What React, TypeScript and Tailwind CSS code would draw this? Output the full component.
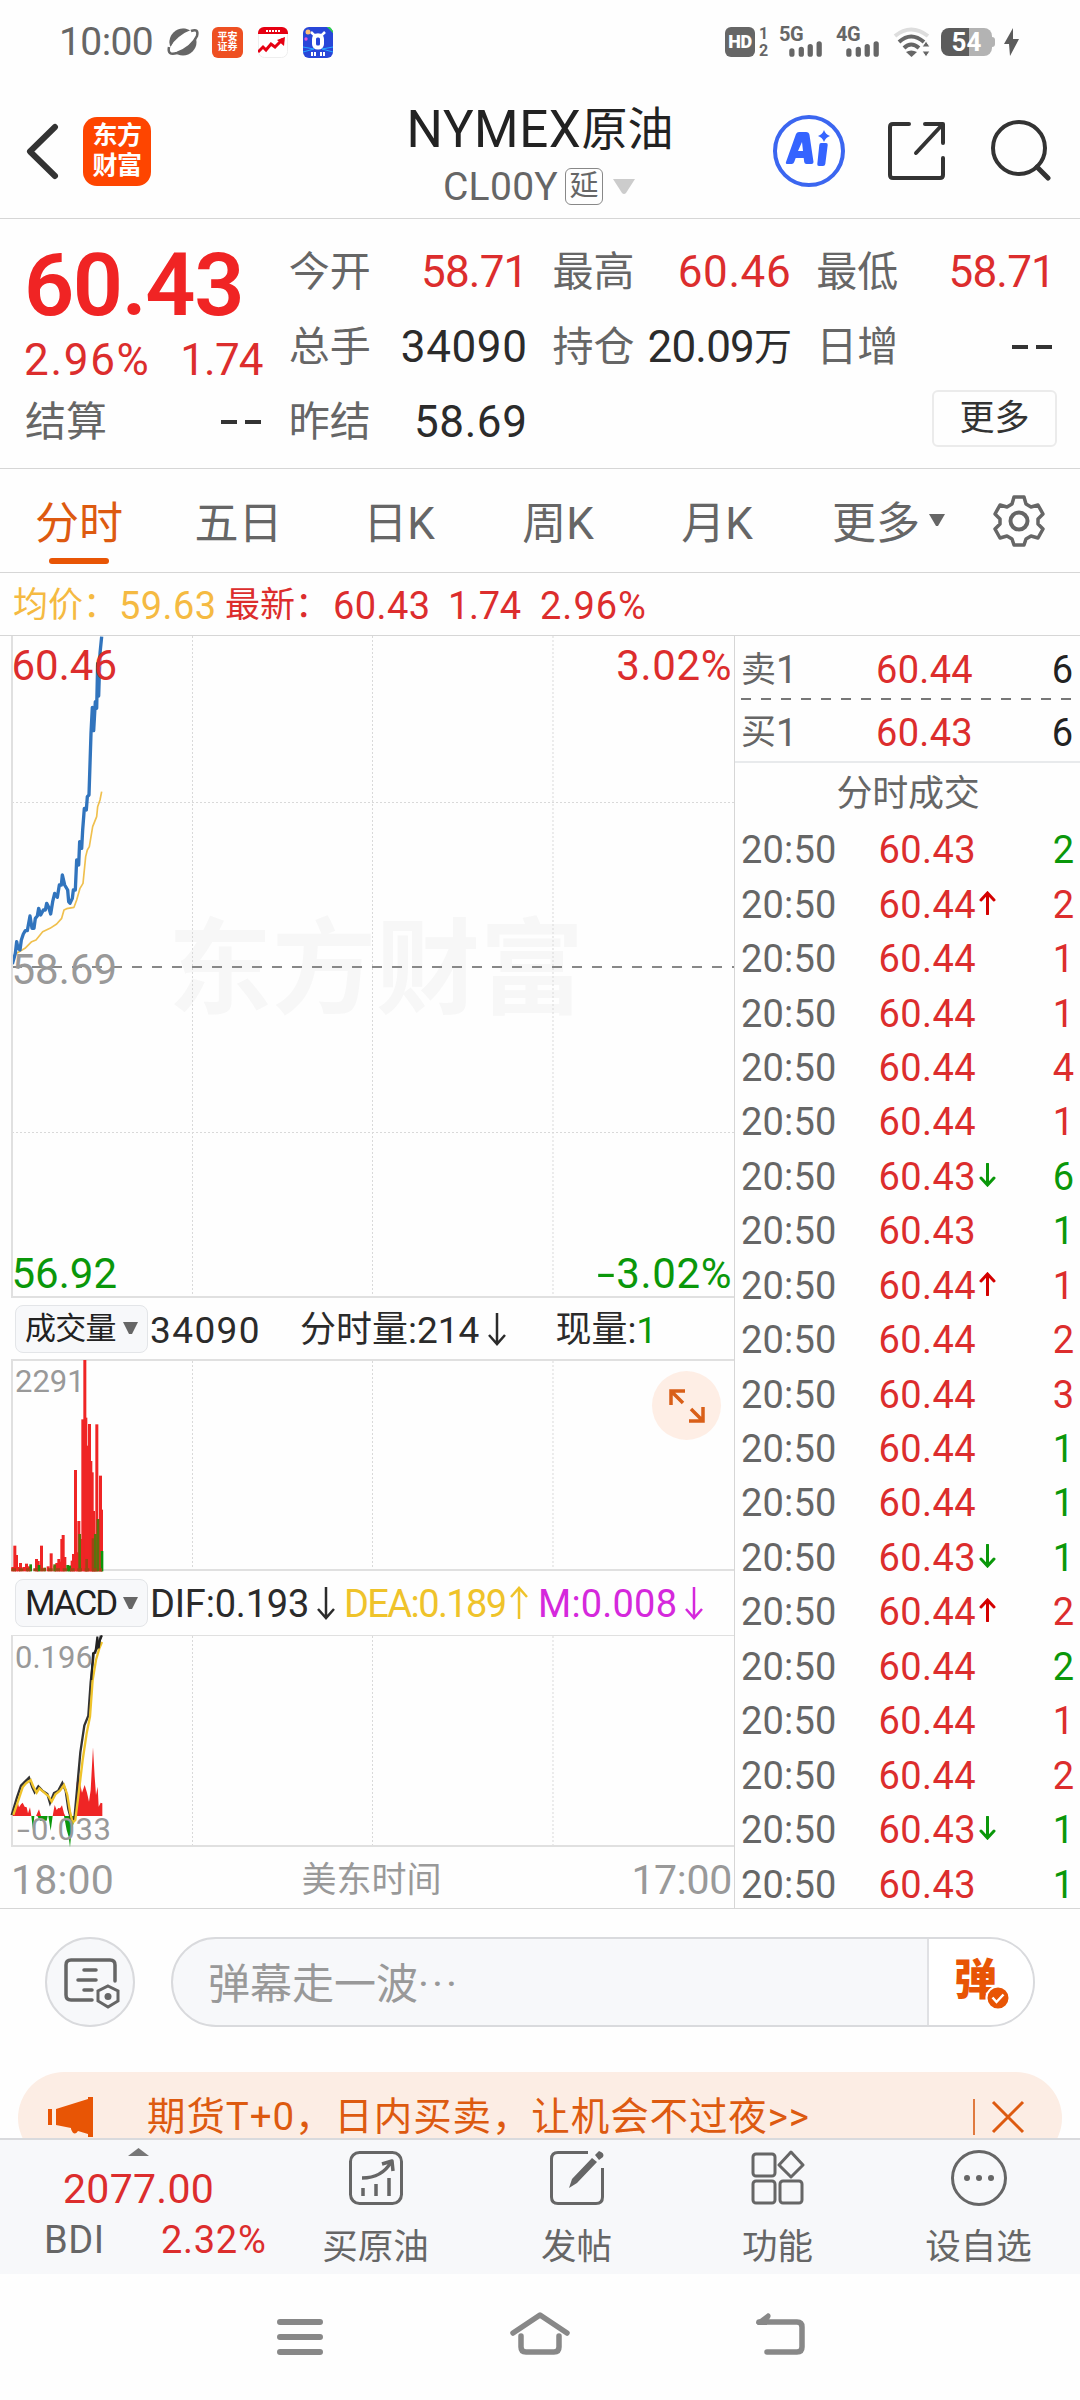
import React from "react";

const RED = "text-[#dc2d2d]";
const GREEN = "text-[#0a970a]";

function Cjk({ children, className = "" }: { children: React.ReactNode; className?: string }) {
  return <span className={"leading-none " + className}>{children}</span>;
}

function StatusBar() {
  return (
    <div className="flex h-[84px] items-center pl-[59px] text-[#666]">
      <span className="w-[107px] text-[39px] tracking-[-0.6px]">10:00</span>
      <svg width="34" height="30" viewBox="-1 0 34 30" className="mr-[12px]">
        <circle cx="16" cy="15" r="13.5" fill="#666" />
        <ellipse cx="16" cy="15" rx="17" ry="6.6" transform="rotate(-40 16 15)" fill="#fff" />
        <path d="M24 4Q32 1 30 9 25 20 10 26 0 29 2 20" fill="none" stroke="#666" strokeWidth="2.500" />
        <path d="M7 7A13.500 13.500 0 0 1 20 2Q8 9 4 19 0 13 7 7Z" fill="#666" />
      </svg>
      <div className="mr-[15px] flex h-[31px] w-[31px] flex-col items-center justify-center rounded-[6px] bg-[#ee5022] text-[10px] font-bold leading-[10px] text-white">
        <span>平安</span>
        <span>证券</span>
      </div>
      <svg width="30" height="31" viewBox="0 0 30 31" className="mr-[15px]">
        <rect x=".5" y=".5" width="29" height="30" rx="6" fill="#fff" stroke="#eee" />
        <path d="M0 7V6a6 6 0 0 1 6-6h18a6 6 0 0 1 6 6v1Z" fill="#e60012" />
        <path d="M8 4h15" stroke="#fff" strokeWidth="2" strokeDasharray="2 1" />
        <path d="M0 25l5-5 3 3 5-6 4 3 8-8" fill="none" stroke="#e60012" strokeWidth="3" />
        <path d="M19 13l8-3-1 9Z" fill="#e60012" />
      </svg>
      <svg width="30" height="31" viewBox="0 0 30 31">
        <rect width="30" height="31" rx="6" fill="#2846d8" />
        <path d="M0 20l11 2-11 3M30 20l-11 2 11 3" stroke="#27a7ff" fill="none" />
        <path d="M8 5l3 3h8l3-3" fill="none" stroke="#fff" strokeWidth="2.500" />
        <rect x="11" y="8.500" width="8" height="12" rx="3.500" fill="none" stroke="#fff" strokeWidth="4" />
        <circle cx="5" cy="5" r="2.500" fill="#ffbe76" />
        <path d="M24 0h3l3 4v2Z" fill="#2fd24a" />
        <circle cx="3" cy="12" r="1.700" fill="#e454d8" />
        <path d="M9 25v4M12 25v4M18 25v4M21 25v4" stroke="#fff" strokeWidth="2" />
      </svg>
      <div className="ml-[392px] flex h-[30px] w-[30px] items-center justify-center rounded-[6px] bg-[#666] text-[18px] font-black tracking-[-0.5px] text-white">HD</div>
      <div className="ml-[4px] flex w-[20px] flex-col text-[16px] font-bold leading-[17px]">
        <span>1</span>
        <span>2</span>
      </div>
      <Signal label="5G" />
      <Signal label="4G" />
      <svg width="40" height="30" viewBox="0 0 40 30">
        <g fill="none" strokeWidth="4">
          <path d="M2 9Q18-4 35 9" stroke="#ddd" />
          <path d="M6 15Q18 4 31 15" stroke="#666" />
          <path d="M11 21Q18 14 26 21" stroke="#666" />
        </g>
        <path d="M13 25q5-3 11 0l-5.500 5Z" fill="#666" />
        <path d="M33 14l4 6h-8ZM33 30l4-6h-8Z" fill="#666" stroke="#fff" strokeWidth="1" />
      </svg>
      <div className="ml-[8px] flex h-[28px] w-[51px] items-center justify-center rounded-[8px] bg-[linear-gradient(90deg,#5c5c5c_55%,#b3b3b3_55%)] text-[26px] font-bold leading-[28px] text-white">
        54
      </div>
      <div className="h-[10px] w-[3px] rounded-r bg-[#b3b3b3]" />
      <svg width="15" height="29" viewBox="0 0 15 29" className="ml-[9px]">
        <path d="M9 0L0 16h5L6 28 15 11H9Z" fill="#5c5c5c" />
      </svg>
    </div>
  );
}

function Signal({ label }: { label: string }) {
  return (
    <div className="flex h-[30px] w-[57px] flex-col">
      <span className="h-[14px] text-[20px] font-bold leading-[15px] tracking-[-0.5px]">{label}</span>
      <svg width="36" height="17" viewBox="0 0 36 17" className="ml-[9px]">
        <path d="M3 10.500V14M13 9V14M22.500 6V14M32 3V14" stroke="#666" strokeWidth="5.600" strokeLinecap="round" />
      </svg>
    </div>
  );
}

function Header() {
  return (
    <header className="grid h-[135px] grid-cols-[1fr_auto_1fr] border-b border-[#d6d6d6]">
      <div className="flex items-center pl-[26px]">
        <svg width="33" height="57" viewBox="0 0 33 57">
          <path d="M29 4L4 28.500 29 53" fill="none" stroke="#333" strokeWidth="6" strokeLinecap="round" strokeLinejoin="round" />
        </svg>
        <div className="ml-[24px] flex h-[69px] w-[68px] flex-col items-center justify-center rounded-[14px] bg-[#fe4500] text-[25px] font-bold leading-[30px] tracking-[-0.5px] text-white">
          <span>东方</span>
          <span>财富</span>
        </div>
      </div>
      <div className="flex flex-col items-center pt-[21px]">
        <div className="flex h-[48px] items-center text-[#222]">
          <span className="text-[51px] tracking-[0.6px]">NYMEX</span>
          <Cjk className="text-[46px]">原油</Cjk>
        </div>
        <div className="-ml-[2px] mt-[15px] flex h-[37px] items-center text-[#666]">
          <span className="pt-[2px] text-[39px] tracking-[0.3px]">CL00Y</span>
          <span className="ml-[7px] flex h-[37px] w-[38px] items-center justify-center rounded-[6px] border border-[#888] text-[29px]">延</span>
          <svg width="22" height="15" viewBox="0 0 22 15" className="ml-[10px]">
            <path d="M0 0h22L13 14q-2 2-4 0Z" fill="#ccc" />
          </svg>
        </div>
      </div>
      <div className="flex items-center justify-end pr-[29px]">
        <svg width="74" height="74" viewBox="0 0 74 74">
          <circle cx="37" cy="37" r="34" fill="#fff" stroke="#3b66f0" strokeWidth="4" />
          <path fillRule="evenodd" d="M14 48l10-28q1-2 3-2h7q3 0 3.500 3l4 27q0 2-2 2h-5q-2 0-2.300-2l-.5-4h-8l-1.500 4q-.7 2-2.500 2h-4q-2.500 0-1.700-2ZM26 37h5l-1-9Z" fill="#3564ff" />
          <path d="M49 29h5q2 0 1.700 2l-2.400 19q-.3 2-2.300 2h-4q-2 0-1.700-2l2-19q.2-2 1.700-2Z" fill="#3564ff" />
          <path d="M52 16q1.500 4.500 6 6-4.500 1.500-6 6-1.500-4.500-6-6 4.500-1.500 6-6Z" fill="#3564ff" />
        </svg>
        <svg width="58" height="60" viewBox="0 0 58 60" className="ml-[42px]">
          <path d="M21 3H5Q2 3 2 6V54Q2 57 5 57H52Q55 57 55 54V37M37 3H55V22M54 4L28 32" fill="none" stroke="#333" strokeWidth="4" strokeLinecap="round" strokeLinejoin="round" />
        </svg>
        <svg width="60" height="62" viewBox="0 0 60 62" className="ml-[45px]">
          <circle cx="28" cy="28" r="26" fill="none" stroke="#333" strokeWidth="4" />
          <path d="M46 47L57 58" stroke="#333" strokeWidth="5" strokeLinecap="round" />
        </svg>
      </div>
    </header>
  );
}

function Stat({ label, value, tone }: { label: string; value: string; tone?: string }) {
  const narrow = value.endsWith("1") || value.includes("万");
  return (
    <div className="-mr-px flex h-[75px] items-center justify-between whitespace-nowrap pt-[5px]">
      <Cjk className="-ml-px text-[41px] text-[#666]">{label}</Cjk>
      {value === "--" ? (
        <span className="mr-[3px] flex gap-[8px]">
          <i className="h-[4px] w-[16px] bg-[#333]" />
          <i className="h-[4px] w-[16px] bg-[#333]" />
        </span>
      ) : (
        <span className={"flex items-center text-[44px] " + (narrow ? "tracking-[-0.8px] " : "tracking-[0.6px] ") + (tone ?? "text-[#2b2b2b]")}>
          {value.replace("万", "")}
          {value.includes("万") && <Cjk className="text-[38px]">万</Cjk>}
        </span>
      )}
    </div>
  );
}

function Quote() {
  return (
    <section className="grid h-[250px] grid-cols-4 gap-x-[27px] border-b border-[#d6d6d6] pl-[26px] pr-[26px] pt-[13px]">
      <div>
        <div className="-ml-[2px] flex h-[106px] items-center text-[88px] font-semibold tracking-[-1.4px] text-[#f02424]">60.43</div>
        <div className={"-ml-[2px] flex h-[44px] items-center justify-between text-[44px] " + RED}>
          <span className="tracking-[1.700px]">2.96%</span>
          <span className="tracking-[-0.8px]">1.74</span>
        </div>
        <Stat label="结算" value="--" />
      </div>
      <div>
        <Stat label="今开" value="58.71" tone={RED} />
        <Stat label="总手" value="34090" />
        <Stat label="昨结" value="58.69" />
      </div>
      <div>
        <Stat label="最高" value="60.46" tone={RED} />
        <Stat label="持仓" value="20.09万" />
      </div>
      <div>
        <Stat label="最低" value="58.71" tone={RED} />
        <Stat label="日增" value="--" />
        <div className="flex h-[73px] items-center justify-end">
          <button className="-mr-[3px] flex h-[57px] w-[125px] items-center justify-center rounded-[6px] border-2 border-[#ebebeb] text-[35px] text-[#333]">更多</button>
        </div>
      </div>
    </section>
  );
}

function Tabs() {
  return (
    <nav className="flex h-[104px] items-center whitespace-nowrap border-b border-[#d6d6d6] pt-[6px] text-[44px] text-[#666]">
      <div className="relative flex h-full w-[158px] items-center justify-center text-[#dd5a10]">
        分时
        <i className="absolute bottom-[8px] left-[49px] h-[6px] w-[60px] rounded-full bg-[#e85505]" />
      </div>
      <div className="w-[161px] text-center">五日</div>
      <div className="w-[160px] text-center">日K</div>
      <div className="w-[158px] text-center">周K</div>
      <div className="w-[160px] text-center">月K</div>
      <div className="ml-[35px]">更多</div>
      <svg width="16" height="13" viewBox="0 0 16 13" className="-mt-[6px] ml-[9px]">
        <path d="M0 0h16L9 12H7Z" fill="#666" />
      </svg>
      <svg width="54" height="54" viewBox="0 0 54 54" className="-mt-[6px] ml-[47px]">
        <path d="M22 3h10l2 7 5 3 7-2 5 9-5 5v5l5 5-5 9-7-2-5 3-2 6H22l-2-6-5-3-7 2-5-9 5-5v-5l-5-5 5-9 7 2 5-3Z" fill="none" stroke="#666" strokeWidth="3.500" strokeLinejoin="round" />
        <circle cx="27" cy="27" r="8.500" fill="none" stroke="#666" strokeWidth="4" />
      </svg>
    </nav>
  );
}

function Summary() {
  return (
    <div className={"flex h-[63px] items-center whitespace-nowrap border-b border-[#d6d6d6] pl-[13px] pt-[3px] text-[38px] " + RED}>
      <span className="flex w-[212px] items-center text-[#f5ba42]">
        <Cjk className="w-[106px] text-[35px]">均价：</Cjk>
        <span className="tracking-[0.4px]">59.63</span>
      </span>
      <Cjk className="w-[108px] text-[35px]">最新：</Cjk>
      <span className="w-[115px] tracking-[0.4px]">60.43</span>
      <span className="w-[92px] tracking-[-0.3px]">1.74</span>
      <span className="tracking-[1px]">2.96%</span>
    </div>
  );
}

const GRID_X = [180.5, 360.5, 541];

function GridLines({ height }: { height: number }) {
  return (
    <g stroke="#d9d9d9" strokeDasharray="2 2">
      {GRID_X.map((x) => (
        <path key={x} d={`M${x} 0V${height}`} />
      ))}
    </g>
  );
}

function Minus() {
  return <span className="mr-[3px] inline-block w-[16px] origin-left scale-x-[1.55]">-</span>;
}

function PriceChart() {
  return (
    <div className="relative ml-[11px] h-[662px] border-b-2 border-l-2 border-[#e0e0e0]">
      <div className="absolute left-[155px] top-[283px] text-[104px] font-bold leading-none text-[#f7f7f7]">东方财富</div>
      <svg width="721" height="660" viewBox="1 0 721 660" className="absolute left-0 top-0">
        <GridLines height={660} />
        <path d="M0 166.500H722M0 496.500H722" stroke="#d9d9d9" strokeDasharray="2 2" />
        <path d="M0 331H722" stroke="#888" strokeWidth="2" strokeDasharray="10 10" />
        <g transform="translate(-12 -16) scale(.33333)" fill="none" strokeLinejoin="round">
          <path d="M50 1000L75 985 95 965 108 960 128 935 150 925 170 912 185 895 192 870 200 866 222 862 230 840 240 805 249 790 257 710 262 690 268 680 278 620 290 590 293 560 300 540 305 515" stroke="#f0c04e" strokeWidth="5" />
          <path d="M37 1032L42 1015 46 1000 50 965 54 985 60 990 64 960 70 942 76 932 82 932 90 888 96 925 102 925 106 895 112 888 116 865 122 885 130 870 136 870 140 850 146 862 152 882 158 845 164 820 172 832 178 795 184 795 187 765 194 795 203 810 206 845 210 850 217 835 220 810 226 810 230 720 236 735 239 665 245 685 248 630 253 565 259 570 262 530 267 525 273 340 277 262 281 332 286 245 290 265 293 130 296 228 300 100 305 50" stroke="#3174bd" strokeWidth="10" />
        </g>
      </svg>
      <div className="absolute -left-[1.500px] right-0 top-[9px] flex justify-between pr-[2px] text-[42px] leading-[42px] text-[#dc2d2d]">
        <span>60.46</span>
        <span className="tracking-[0.6px]">3.02%</span>
      </div>
      <div className="absolute -left-[1.500px] top-[313px] text-[42px] leading-[42px] text-[#999]">58.69</div>
      <div className="absolute -left-[1.500px] bottom-[1px] right-0 flex justify-between pr-[2px] text-[42px] leading-[42px] text-[#0a970a]">
        <span>56.92</span>
        <span className="tracking-[0.6px]"><Minus />3.02%</span>
      </div>
    </div>
  );
}

function Picker({ label }: { label: string }) {
  return (
    <div className="flex h-[48px] w-[133px] items-center justify-between rounded-[8px] border border-[#e3e5e8] bg-[#f7f8fa] pl-[9px] pr-[9px] text-[#222]">
      <span>{label}</span>
      <svg width="15" height="13" viewBox="0 0 15 13">
        <path d="M0 0h15L9 12H6Z" fill="#666" />
      </svg>
    </div>
  );
}

function Arrow({ up = false, className = "" }: { up?: boolean; className?: string }) {
  return (
    <svg width="18" height="34" viewBox="0 0 18 34" className={"shrink-0 " + className}>
      <path d={up ? "M9 33V2M1 11L9 2 17 11" : "M9 1V32M1 23L9 32 17 23"} fill="none" stroke="currentColor" strokeWidth="2.500" />
    </svg>
  );
}

const VOL_RED: [number, number][] = [
  [39, 684], [45, 620], [50, 648], [56, 684], [62, 672], [72, 684], [80, 674], [86, 682], [110, 660], [115, 666], [125, 620], [145, 682],
  [154, 643], [165, 680], [171, 672], [177, 660], [182, 668], [186, 600], [190, 588], [195, 654], [211, 680], [217, 665], [221, 645],
  [227, 393], [232, 640], [237, 546], [243, 600], [249, 241], [255, 63], [258, 236], [263, 320], [269, 255], [273, 366], [277, 400],
  [281, 516], [286, 600], [291, 256], [296, 560], [302, 410], [305, 512],
];
const VOL_GREEN: [number, number, string][] = [
  [92, 676, "#1c8b0c"], [117, 678, "#1c8b0c"], [134, 686, "#5b720c"], [164, 676, "#5b720c"], [203, 678, "#1c8b0c"], [209, 680, "#1c8b0c"],
  [239, 585, "#5b720c"], [260, 660, "#a04414"], [279, 598, "#a04414"], [286, 585, "#5b720c"], [294, 540, "#5b720c"], [306, 636, "#0a970a"],
];

function VolumeChart() {
  return (
    <div className="relative ml-[11px] h-[212px] border-y-2 border-l-2 border-[#e0e0e0]">
      <svg width="721" height="208" viewBox="1 0 721 208" className="absolute left-0 top-0 overflow-visible">
        <GridLines height={208} />
      </svg>
      <div className="absolute left-[2px] top-[5px] text-[31px] leading-[31px] text-[#999]">2291</div>
      <svg width="110" height="212" viewBox="1 0 110 212" className="absolute left-0 top-0 overflow-visible">
        <g transform="translate(-12 -22) scale(.33333)">
          {VOL_RED.map(([x, y], i) => (
            <rect key={i} x={x - 5} y={y} width="9" height={697 - y} fill="#ef2525" />
          ))}
          {VOL_GREEN.map(([x, y, c], i) => (
            <rect key={i} x={x - 4} y={y} width="8" height={697 - y} fill={c} />
          ))}
          <path d="M34 692H306" stroke="#a04414" strokeWidth="9" strokeDasharray="14 8" />
        </g>
      </svg>
      <div className="absolute right-[13px] top-[10px] flex h-[69px] w-[69px] items-center justify-center rounded-full bg-[#feeee5]">
        <svg width="36" height="36" viewBox="0 0 36 36">
          <path d="M2 17V3H16M3 4L14 15M34 19V33H20M33 32L22 21" fill="none" stroke="#d95f18" strokeWidth="3.500" />
        </svg>
      </div>
    </div>
  );
}

function MacdChart() {
  return (
    <div className="relative ml-[11px] h-[212px] border-b-2 border-l-2 border-t border-[#e0e0e0]">
      <svg width="721" height="209" viewBox="1 0 721 209" className="absolute left-0 top-0 overflow-visible">
        <GridLines height={209} />
        <g transform="translate(-12 -296) scale(.33333)">
          <path d="M38 1428L46 1400 52 1382 57 1402 63 1393 68 1388 74 1400 80 1402 84 1420 90 1402 94 1428ZM108 1428L117 1408 123 1428ZM158 1428L164 1395 170 1410 175 1404 180 1405 186 1396 192 1420 196 1428ZM229 1428L230 1330 236 1290 240 1330 246 1358 254 1335 261 1358 267 1385 272 1350 279 1222 284 1310 288 1365 293 1340 296 1400 302 1388 307 1390V1428Z" fill="#ef2525" />
          <path d="M94 1428L99 1470 103 1428ZM112 1428H143L140 1442 120 1442ZM145 1428L152 1472 158 1428ZM192 1428L200 1470 206 1490 210 1522 215 1470 222 1446 226 1428Z" fill="#0a970a" />
          <path d="M38 1428L54 1375 66 1340 78 1328 90 1316 100 1345 107 1360 118 1342 130 1355 145 1365 153 1392 165 1362 178 1355 190 1332 200 1355 208 1410 216 1440 226 1440 236 1330 244 1240 256 1160 268 1130 275 1030 284 945 296 925 306 890" transform="translate(-3 -3)" fill="none" stroke="#333" strokeWidth="7" />
          <path d="M40 1425L56 1378 68 1342 78 1330 92 1320 100 1340 110 1358 118 1345 132 1357 145 1368 155 1385 167 1362 180 1352 192 1335 202 1365 210 1415 218 1448 226 1440 236 1360 248 1260 260 1180 270 1130 278 1020 288 960 298 925 306 906" fill="none" stroke="#efc32a" strokeWidth="7" />
          <path d="M274 1020L279 940 286 938 292 890 296 925 300 900 306 886" fill="none" stroke="#222" strokeWidth="6" />
        </g>
      </svg>
      <div className="absolute left-[2px] top-[6px] text-[31px] leading-[31px] text-[#999]">0.196</div>
      <div className="absolute bottom-0 left-[4px] text-[31px] leading-[31px] tracking-[0.5px] text-[#999]"><span className="inline-block w-[14px] origin-left scale-x-[1.500]">-</span>0.033</div>
    </div>
  );
}

function ChartColumn() {
  return (
    <div className="w-[735px] shrink-0 border-r border-[#d6d6d6]">
      <PriceChart />
      <div className="flex h-[61px] items-center whitespace-nowrap pl-[15px] text-[37px] text-[#2b2b2b]">
        <div className="text-[31px] tracking-[-0.8px]"><Picker label="成交量" /></div>
        <span className="ml-[2px] w-[150px] pt-[3px] tracking-[1.4px]">34090</span>
        <span className="flex items-center pt-[3px]"><Cjk className="text-[36px]">分时量</Cjk>:214</span>
        <Arrow className="ml-[9px]" />
        <span className="ml-[49px] flex items-center pt-[3px]"><Cjk className="text-[36px]">现量</Cjk>:<span className={GREEN}>1</span></span>
      </div>
      <VolumeChart />
      <div className="flex h-[64px] items-center whitespace-nowrap pl-[15px] text-[38px] text-[#2b2b2b]">
        <div className="text-[35px] tracking-[-2px]"><Picker label="MACD" /></div>
        <span className="ml-[2px] w-[167px] pt-[2px] tracking-[-0.2px]">DIF:0.193</span>
        <Arrow />
        <span className="ml-[9px] flex w-[194px] items-center text-[#efc32a]">
          <span className="w-[166px] pt-[2px] tracking-[-1.600px]">DEA:0.189</span>
          <Arrow up />
        </span>
        <span className="flex items-center text-[#d528dc]">
          <span className="w-[147px] pt-[2px] tracking-[0.2px]">M:0.008</span>
          <Arrow />
        </span>
      </div>
      <MacdChart />
      <div className="flex h-[61px] items-center justify-between pl-[11px] pr-[2px] pt-[6px] text-[41px] text-[#999]">
        <span className="w-[120px] tracking-[0.2px]">18:00</span>
        <Cjk className="text-[35px]">美东时间</Cjk>
        <span className="w-[120px] text-right tracking-[-0.3px]">17:00</span>
      </div>
    </div>
  );
}

type Trade = { p: string; q: number; d?: "up" | "down"; g?: boolean };
const TRADES: Trade[] = [
  { p: "60.43", q: 2, g: true },
  { p: "60.44", q: 2, d: "up" },
  { p: "60.44", q: 1 },
  { p: "60.44", q: 1 },
  { p: "60.44", q: 4 },
  { p: "60.44", q: 1 },
  { p: "60.43", q: 6, d: "down", g: true },
  { p: "60.43", q: 1, g: true },
  { p: "60.44", q: 1, d: "up" },
  { p: "60.44", q: 2 },
  { p: "60.44", q: 3 },
  { p: "60.44", q: 1, g: true },
  { p: "60.44", q: 1, g: true },
  { p: "60.43", q: 1, d: "down", g: true },
  { p: "60.44", q: 2, d: "up" },
  { p: "60.44", q: 2, g: true },
  { p: "60.44", q: 1 },
  { p: "60.44", q: 2 },
  { p: "60.43", q: 1, d: "down", g: true },
  { p: "60.43", q: 1, g: true },
];

function Level({ label, price }: { label: string; price: string }) {
  return (
    <div className="flex h-full items-center pl-[6px] pr-[7px] text-[38px]">
      <span className="flex items-center text-[#666]"><Cjk className="text-[35px]">{label}</Cjk>1</span>
      <span className={"ml-auto w-[98px] text-right tracking-[0.3px] " + RED}>{price}</span>
      <span className="w-[100px] text-right text-[#222]">6</span>
    </div>
  );
}

function OrderColumn() {
  return (
    <div className="w-[345px]">
      <div className="h-[62px] pt-[6px]"><Level label="卖" price="60.44" /></div>
      <svg width="332" height="2" className="ml-[6px] block">
        <path d="M0 1H332" stroke="#777" strokeWidth="2" strokeDasharray="10 10" />
      </svg>
      <div className="h-[63px] border-b-2 border-[#e8eaec] pt-[4px]"><Level label="买" price="60.43" /></div>
      <div className="flex h-[60px] items-center justify-center pl-[2px] pr-[1px] pt-[2px] text-[36px] leading-none tracking-[-0.3px] text-[#666]">分时成交</div>
      <div>
        {TRADES.map((t, i) => (
          <div key={i} className="flex h-[54.45px] items-center pl-[6px] pr-[6px] text-[38px] text-[#dc2d2d]">
            <span className="w-[136px] tracking-[0.2px] text-[#666]">20:50</span>
            <span className="w-[99px] text-right tracking-[0.4px]">{t.p}</span>
            <span className="w-[20px] pl-[3px]">
              {t.d && (
                <svg width="17" height="24" viewBox="0 0 17 24" className={t.d === "up" ? "mb-[4px] block text-[#d40000]" : "mb-[4px] block text-[#0a970a]"}>
                  <path d={t.d === "up" ? "M8.500 23V3M2 9L8.500 2 15 9" : "M8.500 1V21M2 15L8.500 22 15 15"} fill="none" stroke="currentColor" strokeWidth="3" strokeLinecap="round" />
                </svg>
              )}
            </span>
            <span className={"flex-1 text-right " + (t.g ? GREEN : RED)}>{t.q}</span>
          </div>
        ))}
      </div>
    </div>
  );
}

function CommentBar() {
  return (
    <div className="flex pl-[45px] pt-[28px]">
      <div className="flex h-[90px] w-[90px] items-center justify-center rounded-full border-2 border-[#d9dadd] bg-[#f7f8fa]">
        <svg width="56" height="52" viewBox="0 0 56 52" className="ml-[3px] mt-[3px]">
          <path d="M51 23V7Q51 2 46 2H7Q2 2 2 7V37Q2 42 7 42H28M20 12H32M14 22H32M20 32H28" fill="none" stroke="#666" strokeWidth="3.500" strokeLinecap="round" />
          <path d="M44 28L54 33V43L44 49 34 43V33Z" fill="#f7f8fa" stroke="#666" strokeWidth="3" />
          <circle cx="44" cy="38.500" r="3.500" fill="#666" />
        </svg>
      </div>
      <div className="ml-[36px] flex h-[90px] w-[864px] overflow-hidden rounded-full border-2 border-[#d9dadd] bg-[#f7f8fa]">
        <div className="flex flex-1 items-center pl-[35px] pt-[5px] text-[42px] leading-none text-[#999]">
          弹幕走一波<span className="tracking-[3px]">···</span>
        </div>
        <div className="relative w-[106px] border-l-2 border-[#e0e1e4] bg-white">
          <span className="absolute left-[25px] top-[20px] text-[43px] font-black leading-none text-[#e85505]">弹</span>
          <svg width="26" height="26" viewBox="0 0 26 26" className="absolute left-[56px] top-[46px]">
            <circle cx="13" cy="13" r="11.500" fill="#e85505" stroke="#fff" strokeWidth="2" />
            <path d="M7.500 12.500L11.500 17 18.500 9.500" fill="none" stroke="#fff" strokeWidth="2.500" />
          </svg>
        </div>
      </div>
    </div>
  );
}

function Banner() {
  return (
    <div className="mx-[18px] mt-[45px] h-[66px] overflow-hidden">
      <div className="flex h-[92px] items-center whitespace-nowrap rounded-[46px] bg-[#fcede4] pl-[30px] text-[38.500px] leading-none text-[#dd5a10]">
        <svg width="46" height="40" viewBox="0 0 46 40" className="-mt-[3px]">
          <path d="M0 12H4V28H0ZM8 12L40 2V0H45V40H40V37L30 34Q26 40 23 32V31L8 28Z" fill="#e85505" />
        </svg>
        <span className="-mt-px ml-[53px] w-[826px] tracking-[0.9px]">期货T+0，日内买卖，让机会不过夜&gt;&gt;</span>
        <i className="-mt-[2px] h-[36px] w-[2px] bg-[#e07a40]" />
        <svg width="34" height="34" viewBox="0 0 34 34" className="-mt-[3px] ml-[16px]">
          <path d="M2 2L32 32M32 2L2 32" stroke="#dd5a10" strokeWidth="3" />
        </svg>
      </div>
    </div>
  );
}

function NavItem({ label, children }: { label: string; children: React.ReactNode }) {
  return (
    <div className="flex w-[201px] flex-col items-center pt-[10px]">
      <svg width="56" height="56" viewBox="0 0 56 56" fill="none" stroke="#666" strokeWidth="3" strokeLinejoin="round">
        {children}
      </svg>
      <span className="mt-[24px] text-[35.500px] leading-none text-[#666]">{label}</span>
    </div>
  );
}

function BottomNav() {
  return (
    <div className="flex h-[136px] border-t-2 border-[#d9dadd] bg-[#f7f8fa]">
      <div className="w-[275px]">
        <svg width="21" height="8" viewBox="0 0 21 8" className="ml-[128px] mt-[8px] block">
          <path d="M0 8L10.500 0 21 8Z" fill="#777" />
        </svg>
        <div className={"mt-[13px] pl-[63px] text-[41px] leading-[40px] tracking-[0.3px] " + RED}>2077.00</div>
        <div className="mt-[13px] flex items-center pl-[44px] text-[38px] leading-[36px] text-[#666]">
          <span className="w-[117px] tracking-[0.6px]">BDI</span>
          <span className={"tracking-[0.7px] " + RED}>2.32%</span>
        </div>
      </div>
      <NavItem label="买原油">
        <rect x="2.500" y="2.500" width="51" height="51" rx="9" />
        <path d="M14 28Q34 28 43 12M34 14L44 11 45 21M15 38V46M28 34V46M41 28V46" strokeWidth="3.500" />
      </NavItem>
      <NavItem label="发帖">
        <path d="M39 2.500H9Q2.500 2.500 2.500 9V47Q2.500 53.500 9 53.500H47Q53.500 53.500 53.500 47V18" />
        <path d="M20 38L23 29 43 8 48 12 28 33ZM46 5L50 1Q56 3 54 7L50 10Z" fill="#666" stroke="none" />
      </NavItem>
      <NavItem label="功能">
        <rect x="3" y="4" width="22" height="22" rx="3" />
        <path d="M41 2L53 15 41 27 29 15Z" />
        <rect x="3" y="31" width="22" height="22" rx="3" />
        <rect x="30" y="31" width="22" height="22" rx="3" />
      </NavItem>
      <NavItem label="设自选">
        <circle cx="28" cy="28" r="26.500" />
        <path d="M16 28h.01M28 28h.01M40 28h.01" strokeWidth="6" strokeLinecap="round" />
      </NavItem>
    </div>
  );
}

function SystemNav() {
  return (
    <div className="flex h-[126px] items-start pl-[277px] pt-[37px] text-[#888]">
      <svg width="46" height="46" viewBox="0 0 46 46">
        <path d="M3 11H43M3 26H43M3 41H43" stroke="currentColor" strokeWidth="6" strokeLinecap="round" />
      </svg>
      <svg width="60" height="46" viewBox="0 0 60 46" className="ml-[187px]">
        <path d="M3 22L30 4 57 22M11 25V36Q11 41 16 41H44Q49 41 49 36V25" fill="none" stroke="currentColor" strokeWidth="5.500" strokeLinecap="round" strokeLinejoin="round" />
      </svg>
      <svg width="50" height="46" viewBox="0 0 50 46" className="ml-[185px]">
        <path d="M4 11H42Q47 11 47 16V36Q47 41 42 41H12" fill="none" stroke="currentColor" strokeWidth="5.500" strokeLinecap="round" />
        <path d="M1 11L13 2q4 1 2 5l-3 4v3H3q-2-1-2-3Z" fill="currentColor" />
      </svg>
    </div>
  );
}

export default function App() {
  return (
    <div className="h-[2400px] w-[1080px] overflow-hidden bg-[#fefefe] font-[Roboto,'Noto_Sans_CJK_SC',sans-serif] leading-none">
      <StatusBar />
      <Header />
      <Quote />
      <Tabs />
      <Summary />
      <main className="flex h-[1273px] overflow-hidden border-b border-[#d6d6d6]">
        <ChartColumn />
        <OrderColumn />
      </main>
      <CommentBar />
      <Banner />
      <BottomNav />
      <SystemNav />
    </div>
  );
}
